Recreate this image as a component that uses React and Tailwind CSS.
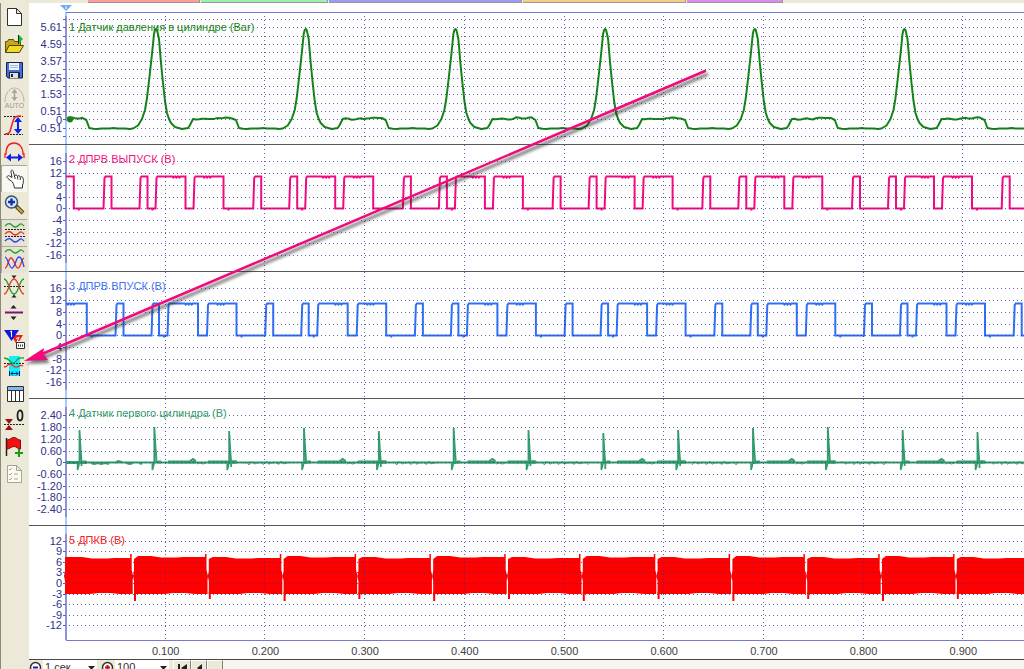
const PERIOD = 149.7
const AXIS_X = 37
const GRID_STEP = 99.7
const CYCLES = Array.from({ length: 18 }, (_, i) => i - 1)
const TICKS = [1, 2, 3, 4, 5, 6, 7, 8, 9]

const tabs = [
  { name: 'red', className: 'w-28 bg-[#ff9c9c]' },
  { name: 'green', className: 'w-[127px] bg-[#9cf0b4]' },
  { name: 'violet', className: 'w-[193px] bg-[#9c9cf8]' },
  { name: 'orange', className: 'w-[163px] bg-[#f8cc84]' },
  { name: 'pink', className: 'w-24 bg-[#dc8cf0]' },
]

// Small repeatable jitter so that traces do not look perfectly straight
const jitter = (n) => Math.sin(n * 12.9898) * Math.cos(n * 4.1414)

function toPath(points) {
  return points.map(([x, y], i) => `${i ? 'L' : 'M'}${x.toFixed(1)} ${y.toFixed(1)}`).join('')
}

function pressurePath() {
  const pulse = [
    [-23, 125.5], [-18, 122.5], [-14, 116], [-11, 107], [-9, 95], [-7, 78], [-4, 51], [-2, 31], [-1, 27], [0, 26],
    [1, 27], [3, 36], [5, 60], [7, 80], [9, 98], [11, 110], [13, 116], [15, 120], [19, 124], [26, 126], [32, 125], [34, 122], [37, 116],
  ]
  const points = []
  CYCLES.forEach((c) => {
    const peak = 127 + c * PERIOD
    pulse.forEach(([dx, y]) => points.push([peak + dx, y]))
    for (let dx = 40; dx <= 77; dx += 3) points.push([peak + dx, 116 + jitter(dx + c) * 0.8 - (dx > 60 ? 1 : 0)])
    points.push([peak + 80, 117], [peak + 83, 125])
    for (let dx = 87; dx <= 123; dx += 4) points.push([peak + dx, 125.6 + jitter(dx) * 0.5])
  })
  return toPath(points.filter(([x]) => x >= AXIS_X))
}

function squarePath(segments) {
  const points = []
  CYCLES.forEach((c) => {
    segments.forEach(([from, to], s) => {
      const a = from + c * PERIOD
      const b = to + c * PERIOD
      if (b < AXIS_X) return
      if (a > AXIS_X) points.push([a - 1, 63.5], [a, 33], [a + 1, 31.5])
      else points.push([AXIS_X, 31.5])
      if (b - a > 20) {
        const mid = a + (b - a) * (s % 2 ? 0.3 : 0.55)
        for (let i = 0; i < 3; i++) {
          if (mid + i * 3 > AXIS_X) points.push([mid + i * 3, 31.5], [mid + i * 3 + 1, 32.5], [mid + i * 3 + 2, 31.5])
        }
      }
      points.push([b, 31.5], [b, 63.5], [b + 5, 63.5], [b + 5, s % 2 ? 65.5 : 64.5], [b + 5, 63.5])
    })
  })
  return toPath(points)
}

function FirstCylinder() {
  const tops = [31, 28, 32, 29, 32, 29, 31, 34, 31, 29, 28, 31, 33]
  return (
    <g stroke="#339c6c" fill="none">
      <path d="M37 63.5H3000" strokeWidth="2" />
      <path d="M37 63.5H58" strokeWidth="3" />
      {CYCLES.map((c) => {
        const x = 139 + c * PERIOD
        const noise = Array.from({ length: 24 }, (_, i) => [x + 75 + i * 2, 64 + jitter(i + c) * 2])
        return x < AXIS_X ? null : (
          <g key={c}>
            <path d={`M${x} 63H${x + 28}M${x + 40} 63H${x + 69}`} strokeWidth="3" />
            <path d={`M${x + 22} 62l3-2 3 2`} strokeWidth="2" />
            <path d={toPath(noise)} />
            <path d={`M${x + 29} 65l3-1 3 1 3-1`} />
          </g>
        )
      })}
      <path d="M62 64l3 1 4-1 3 1 4-1 4 1M86 64l3-2 4 1M97 64l4 1 3-1M110 64l3 1" strokeWidth="2" />
      {Array.from({ length: 40 }, (_, i) => {
        const x = 50.5 + i * 74.83
        const top = tops[i % tops.length]
        return (
          <g key={i}>
            <path d={`M${x - 2} 63v8l1-3 1-5`} strokeWidth="1.500" />
            <path d={`M${x} 65V${top}l1 18 1 13v5`} strokeWidth="1.800" />
            <path d={`M${x + 3} 63h4`} strokeWidth="3" />
          </g>
        )
      })}
    </g>
  )
}

function Crankshaft() {
  return Array.from({ length: 40 }, (_, i) => {
    const x = 105 + (i - 1) * 74.8
    const start = i ? x : AXIS_X - 1
    const end = x + 73
    const t = i % 2 ? 30 : 31
    return (
      <g key={i}>
        <path
          fill="#ff0000"
          d={`M${start} ${i ? 33 : 31}L${start + 4} ${t}h13l10 1.500h15l8-.5H${end - 2}V28H${end - 0.5}V44l1.500 6-.5 4V68H${end - 12}l-10-1h-12l-8 1H${start}V55l-1-5 1-5Z`}
        />
        <path stroke="#ff0000" strokeWidth="2" d={`M${start + 1} ${i ? 66 : 60}V${i ? (i % 2 ? 75 : 73) : 62}`} />
      </g>
    )
  })
}

const halves = [16, 28, 40, 52, 63, 75, 87, 98, 110]
const volts = ['16', '12', '8', '4', '0', '-4', '-8', '-12', '-16']

const channels = [
  {
    title: '1 Датчик давления в цилиндре (Bar)',
    color: '#148414',
    heightClass: 'h-[142px]',
    titleY: 28,
    grid: [16, 24, 33, 41, 49, 58, 66, 75, 83, 91, 100, 108, 116, 125, 133],
    labels: [['5.61', 24], ['4.59', 41], ['3.57', 58], ['2.55', 75], ['1.53', 91], ['0.51', 108], ['0', 117], ['-0.51', 125]],
    top: 13,
    trace: (
      <>
        <path d={pressurePath()} fill="none" stroke="#148414" strokeWidth="2" strokeLinejoin="round" />
        <circle cx="41" cy="116.500" r="3" fill="#148414" />
      </>
    ),
  },
  {
    title: '2 ДПРВ ВЫПУСК (В)',
    color: '#f41484',
    heightClass: 'h-[127px]',
    titleY: 18,
    grid: halves,
    labels: volts.map((v, i) => [v, halves[i]]),
    top: 0,
    trace: (
      <path
        d={squarePath([[75.5, 82.5], [111.5, 118.5], [127.5, 156.5], [165.5, 194.5]])}
        fill="none"
        stroke="#f40a80"
        strokeWidth="2"
      />
    ),
  },
  {
    title: '3 ДПРВ ВПУСК (В)',
    color: '#4474f0',
    heightClass: 'h-[127px]',
    titleY: 18,
    grid: halves,
    labels: volts.map((v, i) => [v, halves[i]]),
    top: 0,
    trace: (
      <path
        d={squarePath([[87.5, 94.5], [123.5, 130], [139.5, 169], [179, 207.5]])}
        fill="none"
        stroke="#3070f8"
        strokeWidth="2"
      />
    ),
  },
  {
    title: '4 Датчик первого цилиндра (В)',
    color: '#339c6c',
    heightClass: 'h-[127px]',
    titleY: 18,
    grid: halves,
    labels: ['2.40', '1.80', '1.20', '0.60', '0', '-0.60', '-1.20', '-1.80', '-2.40'].map((v, i) => [v, halves[i]]),
    top: 0,
    trace: <FirstCylinder />,
  },
  {
    title: '5 ДПКВ (В)',
    color: '#f42020',
    heightClass: 'h-[133px]',
    titleY: 18,
    grid: [15, 25, 36, 46, 57, 68, 78, 89, 99],
    labels: [['12', 15], ['9', 25], ['6', 36], ['3', 46], ['0', 57], ['-3', 68], ['-6', 78], ['-9', 89], ['-12', 99]],
    top: 0,
    bottom: 114,
    trace: <Crankshaft />,
  },
]

function Channel({ channel }) {
  const { title, color, heightClass, titleY, grid, labels, top, bottom, trace } = channel
  const end = bottom || 142
  return (
    <section className={`${heightClass} shrink-0 ${bottom ? '' : 'border-b border-[#585858]'}`}>
      <svg className="block h-full w-full overflow-hidden text-[11px]" role="img" aria-label={title}>
        <path d={`M${AXIS_X} ${top ? 9 : 0}V${end}`} stroke="#a4ccff" strokeWidth="2" />
        <path d={`M${AXIS_X} ${top || 8}V${bottom || 118}`} stroke="#9090d4" strokeWidth="2" />
        {trace}
        <g stroke="#2c2ca0" strokeOpacity="0.75" strokeDasharray="1 3" shapeRendering="crispEdges">
          {grid.map((y) => (
            <line key={y} x1={AXIS_X + 3} x2="100%" y1={y + 0.5} y2={y + 0.5} />
          ))}
          {TICKS.map((n) => {
            const x = Math.round(AXIS_X + n * GRID_STEP) - 0.5
            return <line key={n} x1={x} x2={x} y1={top} y2={end} />
          })}
        </g>
        <g fill="#30308c" textAnchor="end">
          {labels.map(([label, y]) => (
            <text key={label} x="33" y={y + 4}>{label}</text>
          ))}
        </g>
        <path d={grid.map((y) => `M34 ${y + 0.5}h3`).join('')} stroke="#6060b8" />
        <text x="40" y={titleY} fill={color}>{title}</text>
        {top > 0 && (
          <>
            <line x1={AXIS_X} x2="100%" y1="9.500" y2="9.500" stroke="#7878cc" />
            <path d="M31 2h12l-6 6Z" fill="#74a8f4" />
            <path d="M37 3v3" stroke="#ffffff" />
          </>
        )}
        {bottom && (
          <>
            <line x1={AXIS_X} x2="100%" y1={bottom + 0.5} y2={bottom + 0.5} stroke="#7878cc" />
            <g fill="#404040" textAnchor="middle">
              {TICKS.map((n) => (
                <text key={n} x={AXIS_X + n * GRID_STEP} y="129">{(n / 10).toFixed(3)}</text>
              ))}
            </g>
          </>
        )}
      </svg>
    </section>
  )
}

const dash = { stroke: '#202020', strokeDasharray: '2 1' }

const tools = [
  {
    label: 'Новый',
    icon: <path d="M6.500 5.500h9l5 5v12h-14ZM15.500 5.500v5h5" fill="#fff" stroke="#303030" />,
  },
  {
    label: 'Открыть',
    icon: (
      <>
        <path d="M4.500 22V11.500h2l1-2h5l1 2h6V15" fill="#c8a818" stroke="#605010" />
        <path d="M4.500 22.500 8 15.500h14.500l-4 7Z" fill="#f0d828" stroke="#504008" />
        <path d="M17.500 5v9" stroke="#202020" />
        <path d="m18 5 4 4-4 4Z" fill="#10c020" />
      </>
    ),
  },
  {
    label: 'Сохранить',
    icon: (
      <>
        <path d="M5.500 5.500h16v15.500H7l-1.500-1.500Z" fill="#4070d8" stroke="#182050" />
        <path d="M8 6h10v7H8Z" fill="#f0f4fc" />
        <path d="M9 8.500h8M9 10.500h8" stroke="#a8b8d0" />
        <path d="M8 15h11v6H8Z" fill="#202840" />
        <path d="M9 16h8v5H9Z" fill="#e0e0e0" />
        <path d="M10 17h2v3h-2Z" fill="#202840" />
      </>
    ),
  },
  {
    label: 'Авто',
    icon: (
      <>
        <path d="M4 18c0-8 4-14 9.500-14S23 10 23 18" fill="none" stroke="#b8b4a8" />
        <path d="M13.500 6v10" stroke="#a8a498" strokeWidth="1.500" />
        <path d="m10.500 9 3-4 3 4ZM10.500 13l3 4 3-4Z" fill="#a8a498" />
        <text x="13.500" y="24" textAnchor="middle" fontSize="7" fill="#a09c90">AUTO</text>
      </>
    ),
  },
  {
    label: 'Масштаб по вертикали',
    icon: (
      <>
        <path d="M3 5.500h19M3 23.500h19" {...dash} />
        <path d="M4 23c4 0 5-1 6-6l2-7c1-4 3-5 8-5" fill="none" stroke="#f02020" strokeWidth="1.500" />
        <path d="M17 9v11" stroke="#1020e8" strokeWidth="2" />
        <path d="m13 11 4-5 4 5ZM13 18l4 5 4-5Z" fill="#1020e8" />
      </>
    ),
  },
  {
    label: 'Масштаб по горизонтали',
    icon: (
      <>
        <path d="M4 20v-4h1c0-7 3-11 8-11s9 4 9 11h1v4" fill="none" stroke="#f02020" strokeWidth="1.300" />
        <path d="M8 19.500h11" stroke="#1020e8" strokeWidth="2" />
        <path d="m10 15.500-5 4 5 4ZM17 15.500l5 4-5 4Z" fill="#1020e8" />
      </>
    ),
  },
  {
    label: 'Рука',
    light: true,
    icon: (
      <path
        d="M11.500 17 7 13.500c-2-1.500-.5-3.500 1.500-2.500l2.500 1.500L10 7c-.5-2.200 1.800-2.500 2.300-.5L13.500 11c.5-1.500 2.500-1.500 3 .5.500-1.300 2.500-1 2.800.8.700-1 2.700-.8 2.900 1.200.3 3 .3 5-.7 6.500v3h-8c-.5-2.500-1-4-2-6ZM13.500 11l.7 3M16.500 11.500l.3 3M19.300 12.300v2.700"
        fill="#fff"
        stroke="#303030"
      />
    ),
  },
  {
    label: 'Увеличить',
    icon: (
      <>
        <path d="m15 14 7 7" stroke="#404040" strokeWidth="4" />
        <path d="m16 15 5.500 5.500" stroke="#e0b020" strokeWidth="2" />
        <circle cx="10.500" cy="10" r="6" fill="#d8ecff" stroke="#405070" strokeWidth="1.500" />
        <path d="M7 10h7M10.500 6.500v7" stroke="#1030b0" strokeWidth="2.500" />
      </>
    ),
  },
  {
    label: 'Раздельно',
    pressed: true,
    icon: (
      <g fill="none">
        <path d="M4 7c4-4 6-2 8 0s4 1 6-1 3-1 5 1" stroke="#20a030" strokeWidth="1.300" />
        <path d="M4 15c4-4 6-2 8 0s4 1 6-1 3-1 5 1" stroke="#e83020" strokeWidth="1.300" />
        <path d="M4 22c4-4 6-2 8 0s4 1 6-1 3-1 5 1" stroke="#3040f0" strokeWidth="1.300" />
        <path d="M4 10.500h20M4 17.500h20" {...dash} />
      </g>
    ),
  },
  {
    label: 'Группа',
    pressed: true,
    icon: (
      <g fill="none" strokeWidth="1.300">
        <path d="M4 6c4-4 6-2 8 0s4 1 6-1 3-1 5 1" stroke="#20a030" />
        <path d="M4 22c3 0 3-10 6-10s4 10 7 10 3-9 6-10" stroke="#e83020" />
        <path d="M4 11c3 1 4 11 7 11s4-11 7-11 4 6 5 10" stroke="#3040f0" />
      </g>
    ),
  },
  {
    label: 'Вместе',
    icon: (
      <>
        <path d="M3 13.500h20" {...dash} />
        <path d="M3 6c5 0 5 15 10 15S18 6 23 6" fill="none" stroke="#20a030" strokeWidth="1.300" />
        <path d="M3 21c5 0 5-15 10-15s5 15 10 15" fill="none" stroke="#e04030" strokeWidth="1.300" />
        <path d="M10.500 2.500h5L13 5.500ZM10.500 24.500h5L13 21.500Z" fill="#202020" />
      </>
    ),
  },
  {
    label: 'Сдвиг',
    icon: (
      <>
        <path d="M4 12.500h18" stroke="#801080" strokeWidth="2" />
        <path d="M9.500 8.500h6l-3-3.500ZM9.500 16.500h6l-3 3.500Z" fill="#202020" />
      </>
    ),
  },
  {
    label: 'Маркеры',
    icon: (
      <>
        <path d="M10 8h12l-6 10Z" fill="#f02020" />
        <path d="M3 3h15l-7.500 11Z" fill="#1018e0" />
        <path d="M9 5l1.500-1v6M15 11.500l3-1-2 4h3" stroke="#fff" fill="none" />
        <path d="M15.500 15.500h8v6h-8Z" fill="#fff" stroke="#303030" />
        <path d="M17 18.500h5" stroke="#303030" strokeWidth="2" strokeDasharray="1 1" />
      </>
    ),
  },
  {
    label: 'Интервал',
    icon: (
      <>
        <path d="M8 2h11v20H8Z" fill="#10f0f8" />
        <path d="M3 9.500h20" {...dash} />
        <path d="M3 4c4 0 5 2 7 4s4 1 6-2 4-2 7-2" fill="none" stroke="#20a030" strokeWidth="1.300" />
        <path d="M3 13c4 0 3-3 6-3s4 4 7 3 3-3 6-1" fill="none" stroke="#f03020" strokeWidth="1.300" />
        <path d="M10 19.500h7M8.500 17v5M18.500 17v5M12 17.500l-2 2 2 2M15 17.500l2 2-2 2" fill="none" stroke="#101880" />
      </>
    ),
  },
  {
    label: 'Таблица',
    icon: (
      <>
        <path d="M6.500 5.500h16v15h-16Z" fill="#fff" stroke="#303030" />
        <path d="M7 6h15v3H7Z" fill="#80b8f0" />
        <path d="M6 9.500h16M10.500 9v11M14.500 9v11M18.500 9v11" stroke="#303030" />
      </>
    ),
  },
  {
    label: 'Ноль',
    icon: (
      <>
        <path d="M3 16.500h20" {...dash} />
        <path d="M4 11h8l-4 5ZM4 22h8l-4-5Z" fill="#a01010" />
        <ellipse cx="19" cy="7.500" rx="2.500" ry="5" fill="none" stroke="#202020" strokeWidth="1.800" />
      </>
    ),
  },
  {
    label: 'Добавить метку',
    icon: (
      <>
        <path d="M5.500 3v18" stroke="#202020" strokeWidth="1.500" />
        <path d="M6 5c3 0 4-2.500 7-2.500S16 5 19.500 5v9c-3.500 0-3.500-2.500-6.500-2.500S9 14 6 14Z" fill="#f41010" stroke="#801010" />
        <path d="M18 14v8M14 18h8" stroke="#10a010" strokeWidth="2" />
      </>
    ),
  },
  {
    label: 'Отчёт',
    icon: (
      <>
        <path d="M6.500 3.500h9l5 5v12h-14ZM15.500 3.500v5h5" fill="#fbfaf4" stroke="#a8a498" />
        <path d="m8 7 1 1 2-2M8 12l1 1 2-2M8 17l1 1 2-2M13 12h4M13 17h4" fill="none" stroke="#a8a498" />
      </>
    ),
  },
]

function Toolbar() {
  return (
    <aside className="flex w-[29px] shrink-0 flex-col border-l border-[#8c8878] bg-[#ece9d8] pr-0.5">
      {tools.map((tool) => (
        <button
          key={tool.label}
          type="button"
          aria-label={tool.label}
          className={`flex h-[27px] shrink-0 items-start ${tool.light ? 'bg-[#f8f7f2] shadow-[inset_1px_1px_0_#aca899]' : ''} ${tool.pressed ? 'bg-[#e6e3d4] shadow-[inset_1px_1px_0_#aca899]' : ''}`}
        >
          <svg className="block shrink-0" width="26" height="26" viewBox="0 0 26 26">{tool.icon}</svg>
        </button>
      ))}
    </aside>
  )
}

function ZoomSelect({ label, value, children }) {
  return (
    <div className="flex h-full items-center">
      <svg className="mr-px shrink-0" width="13" height="13" viewBox="0 0 13 13">
        <circle cx="6.500" cy="6.500" r="5" fill="#fff" stroke="#303030" strokeWidth="1.500" />
        {children}
      </svg>
      <label className="relative flex h-full items-center bg-white">
        <select aria-label={label} className="h-full w-[54px] appearance-none bg-white pl-0.5 text-[11px] leading-[15px] text-[#303030]">
          <option>{value}</option>
        </select>
        <svg className="pointer-events-none absolute right-0.5" width="7" height="4" viewBox="0 0 7 4">
          <path d="M0 0h7L3.500 4Z" fill="#202020" />
        </svg>
      </label>
    </div>
  )
}

function StatusBar() {
  return (
    <footer className="flex h-4 shrink-0 items-stretch gap-1 border-t border-[#484848] bg-[#ece9d8]">
      <ZoomSelect label="Время" value="1 сек">
        <path d="M4 6.500h5" stroke="#1020c0" strokeWidth="2" />
      </ZoomSelect>
      <ZoomSelect label="Масштаб" value="100">
        <path d="M4 6.500h5M6.500 4v5" stroke="#c01010" strokeWidth="2" />
      </ZoomSelect>
      <div className="flex grow">
        <button type="button" aria-label="В начало" className="flex w-[18px] items-center justify-center border border-white border-r-[#808080] bg-[#ece9d8]">
          <svg width="9" height="8" viewBox="0 0 9 8"><path d="M0 0h2v8H0ZM9 0v8L3 4Z" fill="#202020" /></svg>
        </button>
        <button type="button" aria-label="Назад" className="flex w-4 items-center justify-center border border-white border-r-[#808080] bg-[#ece9d8]">
          <svg width="5" height="8" viewBox="0 0 5 8"><path d="M5 0v8L0 4Z" fill="#202020" /></svg>
        </button>
        <div className="grow bg-[#f6f5ee]">
          <div className="h-full w-4 border border-white border-r-[#808080] bg-[#ece9d8]" />
        </div>
      </div>
    </footer>
  )
}

function Pointer() {
  return (
    <svg className="pointer-events-none absolute top-0 left-0" width="720" height="380" viewBox="0 0 720 380">
      <defs>
        <filter id="soft" x="-5%" y="-5%" width="110%" height="110%">
          <feGaussianBlur stdDeviation="1.500" />
        </filter>
      </defs>
      <g filter="url(#soft)" opacity="0.6" transform="translate(2 3)">
        <path d="M43 354 706 71" stroke="#202020" strokeWidth="3" />
        <path d="m24 361 20-13-1 6 5 6Z" fill="#202020" />
      </g>
      <path d="M42 354 705 71" stroke="#f20a7c" strokeWidth="2.500" strokeLinecap="round" />
      <path d="m24 361 20-13-1 6 5 6Z" fill="#f20a7c" />
    </svg>
  )
}

export default function App() {
  return (
    <div className="relative flex h-screen flex-col overflow-hidden bg-white font-['Liberation_Sans',Arial,sans-serif]">
      <div className="flex h-[3px] shrink-0 gap-px bg-[#ece9d8] pl-[88px]">
        {tabs.map((tab) => (
          <div key={tab.name} className={`${tab.className} border-r border-b border-[#a09890]`} />
        ))}
      </div>
      <div className="flex min-h-0 grow">
        <Toolbar />
        <main className="flex min-w-0 grow flex-col">
          {channels.map((channel) => (
            <Channel key={channel.title} channel={channel} />
          ))}
          <StatusBar />
        </main>
      </div>
      <Pointer />
    </div>
  )
}
